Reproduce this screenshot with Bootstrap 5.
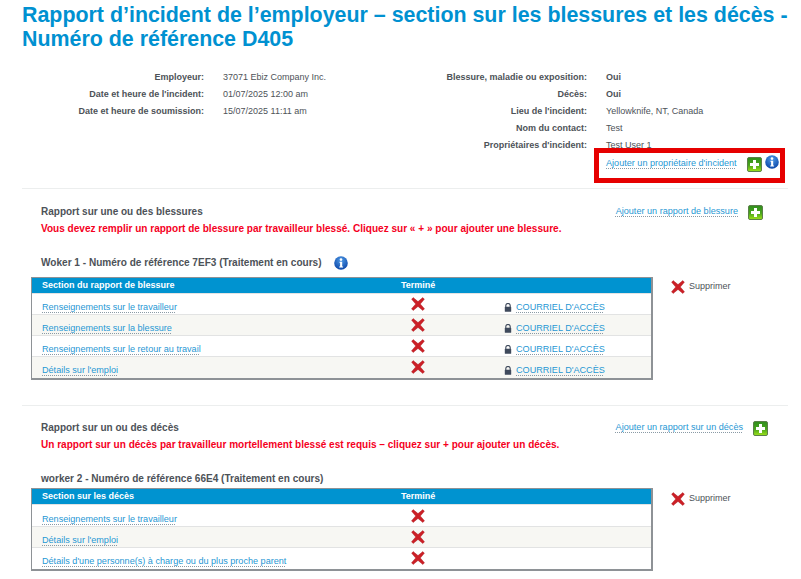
<!DOCTYPE html>
<html lang="fr">
<head>
<meta charset="utf-8">
<title>Rapport d'incident</title>
<link href="https://cdn.jsdelivr.net/npm/bootstrap@5.3.0/dist/css/bootstrap.min.css" rel="stylesheet">
<style>
html,body{height:579px;overflow:hidden;background:#fff}
body{font-family:"Liberation Sans",Arial,sans-serif;font-size:9px;color:#4d5258;line-height:17px}
.pg{padding:4px 13px 0 22px;width:801px;position:relative}
.ttl{font-size:21.4px;line-height:23.5px;font-weight:700;color:#0091d1;margin:0;white-space:nowrap}
.meta{margin-top:18px;height:119px;position:relative}
.mrow{height:17px;display:flex}
.mcol1{width:382px}
.lab1{width:182px;text-align:right;font-weight:700;margin-right:19px}
.lab2{width:183px;text-align:right;font-weight:700;margin-right:19px}
.lnk{color:#1f97d4;font-size:9.1px;text-decoration:underline dotted #8a9aa5;text-underline-offset:2px;white-space:nowrap}
.lnkdown{margin-top:2px}
.ico{display:block;flex:none}
.redbox{position:absolute;left:572px;top:79px;width:191px;height:35px;border:5px solid #e60000}
.rule{border-top:1px solid #eceeee;margin:0;opacity:1}
.sect{padding-left:19px;position:relative}
.h1s{font-size:10px;font-weight:700;line-height:17px}
.err{font-size:10.06px;font-weight:700;color:#f5001e;line-height:17px}
.wk{font-size:10.07px;font-weight:700;line-height:17px}
.tbwrap{margin-left:-10px;width:622px;border:1px solid #8e9296;border-bottom-width:2px;border-right-width:2px}
.tb{width:100%;border-collapse:collapse;table-layout:fixed;margin:0}
.tb th{background:#0093d0;color:#fff;font-size:9px;font-weight:700;height:15px;line-height:15px;padding:0 0 0 10px}
.tb td{height:21px;padding:6px 0 0 10px;font-size:9px;line-height:14px;vertical-align:middle;border-top:1px solid #e2e3e3}
.tb tr.alt td{background:#f7f7f3}
.tb th.c2,.tb td.c2{width:101px;padding-left:0}
.tb td.c3,.tb th.c3{width:149px;padding-left:2px}
.tb td.c1,.tb th.c1{width:369px}
.xi{display:block;margin:-6px 0 0 10px}
.del{display:flex;align-items:center;gap:4px}
</style>
</head>
<body>
<svg width="0" height="0" class="position-absolute">
<defs>
<linearGradient id="gg" x1="0" y1="0" x2="0" y2="1"><stop offset="0" stop-color="#2f8d1e"/><stop offset=".55" stop-color="#4aa51c"/><stop offset="1" stop-color="#9ee21a"/></linearGradient>
<radialGradient id="bg" cx=".5" cy=".3" r=".7"><stop offset="0" stop-color="#4f9ae6"/><stop offset="1" stop-color="#0b46a8"/></radialGradient>
<symbol id="plus" viewBox="0 0 15 15"><rect x=".5" y=".5" width="14" height="14" rx="1.5" fill="url(#gg)" stroke="#5c7f4a"/><path d="M6 3h3v3h3v3H9v3H6V9H3V6h3z" fill="#fff"/></symbol>
<symbol id="info" viewBox="0 0 14 14"><circle cx="7" cy="7" r="6.8" fill="url(#bg)"/><circle cx="7" cy="3.6" r="1.3" fill="#fff"/><path d="M5.6 5.8h2.6v4.6h.9v1.2H5.2v-1.2h.9V7H5.6z" fill="#fff"/></symbol>
<symbol id="cross" viewBox="0 0 14 14"><path d="M2.2.6 7 4.6 11.8.6l1.6 1.6L9.3 7l4.2 4.8-1.7 1.7L7 9.4l-4.8 4.1-1.7-1.7L4.7 7 .6 2.2z" fill="#cc2027" stroke="#a8191f" stroke-width=".4"/></symbol>
<symbol id="lock" viewBox="0 0 8 9"><path d="M1.8 4V2.6a2.2 2.2 0 0 1 4.4 0V4" fill="none" stroke="#3f4a5c" stroke-width="1.1"/><rect x=".8" y="3.8" width="6.4" height="5" rx=".6" fill="#3f4a5c"/></symbol>
</defs>
</svg>
<div class="pg">
  <h1 class="ttl">Rapport d’incident de l’employeur – section sur les blessures et les décès -<br>Numéro de référence D405</h1>
  <div class="meta d-flex">
    <div class="mcol1">
      <div class="mrow"><div class="lab1">Employeur:</div><div>37071 Ebiz Company Inc.</div></div>
      <div class="mrow"><div class="lab1">Date et heure de l'incident:</div><div>01/07/2025 12:00 am</div></div>
      <div class="mrow"><div class="lab1">Date et heure de soumission:</div><div>15/07/2025 11:11 am</div></div>
    </div>
    <div class="flex-grow-1">
      <div class="mrow"><div class="lab2">Blessure, maladie ou exposition:</div><div class="fw-bold">Oui</div></div>
      <div class="mrow"><div class="lab2">Décès:</div><div class="fw-bold">Oui</div></div>
      <div class="mrow"><div class="lab2">Lieu de l'incident:</div><div>Yellowknife, NT, Canada</div></div>
      <div class="mrow"><div class="lab2">Nom du contact:</div><div>Test</div></div>
      <div class="mrow"><div class="lab2">Propriétaires d'incident:</div><div>Test User 1</div></div>
      <div class="mrow"><div class="lab2"></div><div class="d-flex align-items-center"><a class="lnk lnkdown" href="#">Ajouter un propriétaire d'incident</a><svg class="ico" width="15" height="15" style="margin:3px 0 0 10px"><use href="#plus"/></svg><svg class="ico" width="14" height="14" style="margin:-1px 0 0 3px"><use href="#info"/></svg></div></div>
    </div>
    <div class="redbox"></div>
  </div>
  <hr class="rule">
  <section class="sect" style="padding-top:14px;height:216px">
    <div class="d-flex justify-content-between align-items-center" style="width:722px">
      <div class="h1s">Rapport sur une ou des blessures</div>
      <div class="d-flex align-items-center"><a class="lnk" href="#">Ajouter un rapport de blessure</a><svg class="ico" width="15" height="15" style="margin:1px 0 0 10px"><use href="#plus"/></svg></div>
    </div>
    <div class="err">Vous devez remplir un rapport de blessure par travailleur blessé. Cliquez sur « + » pour ajouter une blessure.</div>
    <div class="d-flex align-items-center" style="margin-top:17px;margin-bottom:6px"><div class="wk">Woker 1 - Numéro de référence 7EF3 (Traitement en cours)</div><svg class="ico" width="14" height="14" style="margin-left:12px"><use href="#info"/></svg></div>
    <div class="d-flex align-items-start">
      <div class="tbwrap">
        <table class="tb">
          <tr><th class="c1">Section du rapport de blessure</th><th class="c2">Terminé</th><th class="c3"></th></tr>
          <tr><td class="c1"><a class="lnk" href="#">Renseignements sur le travailleur</a></td><td class="c2"><svg class="xi" width="14" height="14"><use href="#cross"/></svg></td><td class="c3"><svg width="8" height="9" class="me-1"><use href="#lock"/></svg><a class="lnk" href="#">COURRIEL D'ACCÈS</a></td></tr>
          <tr class="alt"><td class="c1"><a class="lnk" href="#">Renseignements sur la blessure</a></td><td class="c2"><svg class="xi" width="14" height="14"><use href="#cross"/></svg></td><td class="c3"><svg width="8" height="9" class="me-1"><use href="#lock"/></svg><a class="lnk" href="#">COURRIEL D'ACCÈS</a></td></tr>
          <tr><td class="c1"><a class="lnk" href="#">Renseignements sur le retour au travail</a></td><td class="c2"><svg class="xi" width="14" height="14"><use href="#cross"/></svg></td><td class="c3"><svg width="8" height="9" class="me-1"><use href="#lock"/></svg><a class="lnk" href="#">COURRIEL D'ACCÈS</a></td></tr>
          <tr class="alt"><td class="c1"><a class="lnk" href="#">Détails sur l'emploi</a></td><td class="c2"><svg class="xi" width="14" height="14"><use href="#cross"/></svg></td><td class="c3"><svg width="8" height="9" class="me-1"><use href="#lock"/></svg><a class="lnk" href="#">COURRIEL D'ACCÈS</a></td></tr>
        </table>
      </div>
      <div class="del" style="margin:1px 0 0 18px"><svg class="ico" width="14" height="14"><use href="#cross"/></svg>Supprimer</div>
    </div>
  </section>
  <hr class="rule">
  <section class="sect" style="padding-top:13px">
    <div class="d-flex justify-content-between align-items-center" style="width:727px">
      <div class="h1s">Rapport sur un ou des décès</div>
      <div class="d-flex align-items-center"><a class="lnk" href="#">Ajouter un rapport sur un décès</a><svg class="ico" width="15" height="15" style="margin:1px 0 0 10px"><use href="#plus"/></svg></div>
    </div>
    <div class="err">Un rapport sur un décès par travailleur mortellement blessé est requis – cliquez sur + pour ajouter un décès.</div>
    <div class="wk" style="margin-top:17px;margin-bottom:1px">worker 2 - Numéro de référence 66E4 (Traitement en cours)</div>
    <div class="d-flex align-items-start">
      <div class="tbwrap">
        <table class="tb">
          <tr><th class="c1">Section sur les décès</th><th class="c2">Terminé</th><th class="c3"></th></tr>
          <tr style="height:22px"><td class="c1"><a class="lnk" href="#">Renseignements sur le travailleur</a></td><td class="c2"><svg class="xi" width="14" height="14"><use href="#cross"/></svg></td><td class="c3"></td></tr>
          <tr class="alt"><td class="c1"><a class="lnk" href="#">Détails sur l'emploi</a></td><td class="c2"><svg class="xi" width="14" height="14"><use href="#cross"/></svg></td><td class="c3"></td></tr>
          <tr><td class="c1"><a class="lnk" href="#">Détails d'une personne(s) à charge ou du plus proche parent</a></td><td class="c2"><svg class="xi" width="14" height="14"><use href="#cross"/></svg></td><td class="c3"></td></tr>
        </table>
      </div>
      <div class="del" style="margin:2px 0 0 18px"><svg class="ico" width="14" height="14"><use href="#cross"/></svg>Supprimer</div>
    </div>
  </section>
</div>
<script src="https://cdn.jsdelivr.net/npm/bootstrap@5.3.0/dist/js/bootstrap.bundle.min.js"></script>
</body>
</html>
